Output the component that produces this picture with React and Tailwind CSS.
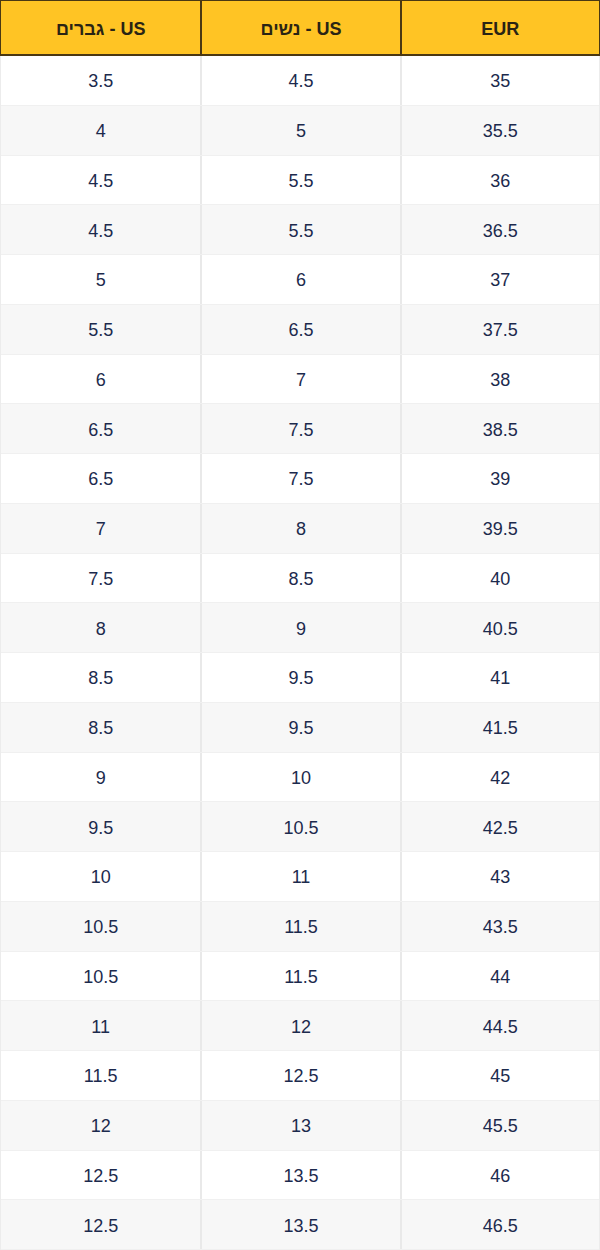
const rows = [
  ['35', '4.5', '3.5'],
  ['35.5', '5', '4'],
  ['36', '5.5', '4.5'],
  ['36.5', '5.5', '4.5'],
  ['37', '6', '5'],
  ['37.5', '6.5', '5.5'],
  ['38', '7', '6'],
  ['38.5', '7.5', '6.5'],
  ['39', '7.5', '6.5'],
  ['39.5', '8', '7'],
  ['40', '8.5', '7.5'],
  ['40.5', '9', '8'],
  ['41', '9.5', '8.5'],
  ['41.5', '9.5', '8.5'],
  ['42', '10', '9'],
  ['42.5', '10.5', '9.5'],
  ['43', '11', '10'],
  ['43.5', '11.5', '10.5'],
  ['44', '11.5', '10.5'],
  ['44.5', '12', '11'],
  ['45', '12.5', '11.5'],
  ['45.5', '13', '12'],
  ['46', '13.5', '12.5'],
  ['46.5', '13.5', '12.5'],
]

const headers = ['EUR', 'US - נשים', 'US - גברים']

export default function App() {
  return (
    <div
      dir="rtl"
      className="w-[600px] h-[1250px] overflow-hidden bg-white"
      style={{ fontFamily: '"Liberation Sans", Arial, sans-serif' }}
    >
      {/* header */}
      <div className="grid grid-cols-3 h-[56px] bg-[#ffc424] border border-b-2 border-[#4b3812]">
        {headers.map((h, i) => (
          <div
            key={h}
            className={`flex items-center justify-center pt-[3px] text-[18px] font-bold text-[#2a2414] ${
              i < 2 ? 'border-l-2 border-[#4b3812]' : ''
            }`}
          >
            {h}
          </div>
        ))}
      </div>

      {/* body */}
      <div className="border-x border-[#ececec]">
        {rows.map((r, idx) => (
          <div
            key={idx}
            className={`grid grid-cols-3 h-[49.75px] border-b border-[#f0f0f0] ${
              idx % 2 ? 'bg-[#f7f7f7]' : 'bg-white'
            }`}
          >
            {r.map((v, i) => (
              <div
                key={i}
                className={`flex items-center justify-center pt-[3px] text-[18px] text-[#1c2a4d] ${
                  i < 2 ? 'border-l-2 border-[#e9e9e9]' : ''
                }`}
              >
                {v}
              </div>
            ))}
          </div>
        ))}
      </div>
    </div>
  )
}
